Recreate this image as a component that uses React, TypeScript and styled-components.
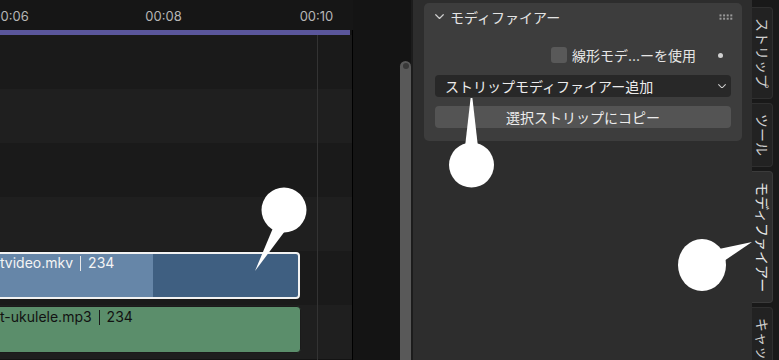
import styled, { createGlobalStyle } from "styled-components";

const GlobalStyle = createGlobalStyle`
  html, body {
    margin: 0;
    padding: 0;
    background: #141414;
  }
`;

const Screen = styled.div`
  position: relative;
  display: flex;
  width: 779px;
  height: 360px;
  overflow: hidden;
  background: #141414;
  color: #e6e6e6;
  font-family: Inter, "Noto Sans CJK JP", sans-serif;
`;

/* ---------- sequencer ---------- */

const Sequencer = styled.div`
  display: flex;
  width: 413px;
  flex-shrink: 0;
  box-sizing: border-box;
  border-right: 2px solid #1c1c1c;
  background: #141414;
`;

const Timeline = styled.div`
  display: flex;
  flex-direction: column;
  width: 353px;
  flex-shrink: 0;
`;

const Ruler = styled.div`
  display: flex;
  height: 30px;
  flex-shrink: 0;
  background: #161616;
  overflow: hidden;
`;

const TimeLabel = styled.div<{ $first?: boolean }>`
  flex: 0 0 153px;
  margin-left: ${(p) => (p.$first ? "-66px" : "0")};
  padding-top: 1px;
  text-align: center;
  font-size: 13px;
  line-height: 30px;
  color: #b6b6b6;
`;

const TrackArea = styled.div`
  position: relative;
  flex: 1;
  display: flex;
  flex-direction: column;
  border-right: 1px solid #000;
  overflow: hidden;
`;

const PlayRange = styled.div`
  width: 350px;
  height: 5px;
  flex-shrink: 0;
  background: #5a569b;
`;

const FrameLine = styled.div`
  position: absolute;
  left: 317px;
  top: 5px;
  bottom: 0;
  width: 1px;
  background: #333;
`;

const Channel = styled.div<{ $alt?: boolean }>`
  height: 54px;
  flex-shrink: 0;
  box-sizing: border-box;
  padding-top: 1px;
  background: ${(p) => (p.$alt ? "#1f1f1f" : "#1a1a1a")};
`;

const StripBase = styled.div`
  display: flex;
  align-items: flex-start;
  height: 47px;
  margin-left: -10px;
  box-sizing: border-box;
  border-radius: 4px;
  font-size: 14px;
`;

const MovieStrip = styled(StripBase)`
  width: 310px;
  padding: 1px 0 0 8px;
  border: 2px solid #f2f2f2;
  background: linear-gradient(to right, #6686a8 0 161px, #3f5f81 161px);
  color: #f4f4f4;
`;

const SoundStrip = styled(StripBase)`
  width: 311px;
  padding: 2px 0 0 9px;
  border: 1px solid #1b1b1b;
  background: #5b8e6b;
  color: #121212;
`;

const StripLabel = styled.div`
  display: flex;
  align-items: center;
  height: 16px;
  line-height: 16px;
  white-space: nowrap;
`;

const Separator = styled.span<{ $dark?: boolean }>`
  display: inline-block;
  width: 1px;
  height: 15px;
  margin: 0 7px;
  background: ${(p) => (p.$dark ? "#1a1a1a" : "#e8e8e8")};
`;

const ScrollLane = styled.div`
  margin-left: auto;
  width: 11px;
  padding-top: 61px;
  display: flex;
`;

const ScrollThumb = styled.div`
  position: relative;
  flex: 1;
  background: #595959;
  border-radius: 6px 6px 0 0;

  &::before {
    content: "";
    position: absolute;
    top: 2px;
    left: 2.5px;
    width: 6px;
    height: 6px;
    border-radius: 50%;
    background: #383838;
  }
`;

/* ---------- sidebar ---------- */

const Sidebar = styled.div`
  flex: 1;
  display: flex;
  background: #2d2d2d;
`;

const SidebarContent = styled.div`
  flex: 1;
  padding: 3px 10px 0 11px;
`;

const Panel = styled.section`
  background: #3d3d3d;
  border-radius: 5px;
  padding: 0 11px 13px;
`;

const PanelHeader = styled.div`
  display: flex;
  align-items: center;
  gap: 6px;
  height: 28px;
  font-size: 14px;
  color: #e4e4e4;
`;

const Grip = styled.svg`
  margin-left: auto;
  margin-right: -2px;
`;

const CheckRow = styled.div`
  display: flex;
  justify-content: flex-end;
  align-items: center;
  height: 22px;
  margin-top: 13px;
  font-size: 14px;
`;

const Checkbox = styled.span`
  width: 16px;
  height: 16px;
  border-radius: 3px;
  background: #595959;
`;

const CheckLabel = styled.span`
  margin-left: 5px;
  color: #e6e6e6;
  white-space: nowrap;
`;

const Decorator = styled.span`
  width: 5px;
  height: 5px;
  border-radius: 50%;
  background: #d0d0d0;
  margin: 0 8px 0 22px;
`;

const Dropdown = styled.div`
  display: flex;
  align-items: center;
  justify-content: space-between;
  height: 22px;
  margin-top: 9px;
  padding: 0 5px 0 10px;
  border-radius: 4px;
  background: #282828;
  font-size: 14px;
  color: #ececec;
`;

const Button = styled.div`
  display: flex;
  align-items: center;
  justify-content: center;
  height: 22px;
  margin-top: 9px;
  border-radius: 4px;
  background: #545454;
  font-size: 14px;
  color: #ececec;
`;

const TabStrip = styled.div`
  width: 27px;
  flex-shrink: 0;
  display: flex;
  flex-direction: column;
  gap: 4px;
  padding-top: 7px;
  background: #191919;
`;

const Tab = styled.div<{ $active?: boolean }>`
  width: 21px;
  box-sizing: border-box;
  padding: 10px 0;
  border: 1px solid ${(p) => (p.$active ? "#3b3b3b" : "#2f2f2f")};
  border-left: none;
  border-radius: 0 4px 4px 0;
  background: ${(p) => (p.$active ? "#2d2d2d" : "#222")};
  color: ${(p) => (p.$active ? "#e8e8e8" : "#cfcfcf")};
  font-size: 14px;
  line-height: 20px;
  writing-mode: vertical-rl;
  text-orientation: sideways;
  white-space: nowrap;
`;

/* ---------- callouts ---------- */

const Callouts = styled.svg`
  position: absolute;
  left: 0;
  top: 0;
  pointer-events: none;
`;

const Chevron = ({ size = 9 }: { size?: number }) => (
  <svg width={size} height={size * 0.6} viewBox="0 0 10 6">
    <polyline
      points="0.8,0.8 5,5 9.2,0.8"
      fill="none"
      stroke="#d0d0d0"
      strokeWidth="1.3"
      strokeLinecap="round"
      strokeLinejoin="round"
    />
  </svg>
);

const GripIcon = () => (
  <Grip width="14" height="6" viewBox="0 0 14 6">
    {[0, 1, 2, 3].map((c) =>
      [0, 1].map((r) => (
        <rect key={`${c}-${r}`} x={c * 3.6 + 0.5} y={r * 3.3 + 0.4} width="2" height="2" fill="#9a9a9a" />
      ))
    )}
  </Grip>
);

const tabs = [
  { label: "ストリップ" },
  { label: "ツール" },
  { label: "モディファイアー", active: true },
  { label: "キャッシュ" },
];

export default function App() {
  return (
    <>
      <GlobalStyle />
      <Screen>
        <Sequencer>
          <Timeline>
            <Ruler>
              <TimeLabel $first>00:06</TimeLabel>
              <TimeLabel>00:08</TimeLabel>
              <TimeLabel>00:10</TimeLabel>
            </Ruler>
            <TrackArea>
              <PlayRange />
              <Channel />
              <Channel $alt />
              <Channel />
              <Channel $alt />
              <Channel>
                <MovieStrip>
                  <StripLabel>
                    tvideo.mkv<Separator />234
                  </StripLabel>
                </MovieStrip>
              </Channel>
              <Channel $alt>
                <SoundStrip>
                  <StripLabel>
                    t-ukulele.mp3<Separator $dark />234
                  </StripLabel>
                </SoundStrip>
              </Channel>
              <FrameLine />
            </TrackArea>
          </Timeline>
          <ScrollLane>
            <ScrollThumb />
          </ScrollLane>
        </Sequencer>

        <Sidebar>
          <SidebarContent>
            <Panel>
              <PanelHeader>
                <Chevron />
                <span>モディファイアー</span>
                <GripIcon />
              </PanelHeader>
              <CheckRow>
                <Checkbox />
                <CheckLabel>線形モデ...ーを使用</CheckLabel>
                <Decorator />
              </CheckRow>
              <Dropdown>
                <span>ストリップモディファイアー追加</span>
                <Chevron size={8} />
              </Dropdown>
              <Button>選択ストリップにコピー</Button>
            </Panel>
          </SidebarContent>
          <TabStrip>
            {tabs.map((t) => (
              <Tab key={t.label} $active={t.active}>
                {t.label}
              </Tab>
            ))}
          </TabStrip>
        </Sidebar>

        <Callouts width="779" height="360" viewBox="0 0 779 360">
          <g fill="#fff">
            <circle cx="284" cy="210" r="22.5" />
            <polygon points="273,228 285,231 255,271" />
            <circle cx="471.5" cy="165" r="22.5" />
            <polygon points="470.6,98 472.4,98 478,147 465,147" />
            <ellipse cx="702" cy="265" rx="24" ry="26" />
            <polygon points="719,249 752,242 724,261" />
          </g>
        </Callouts>
      </Screen>
    </>
  );
}
